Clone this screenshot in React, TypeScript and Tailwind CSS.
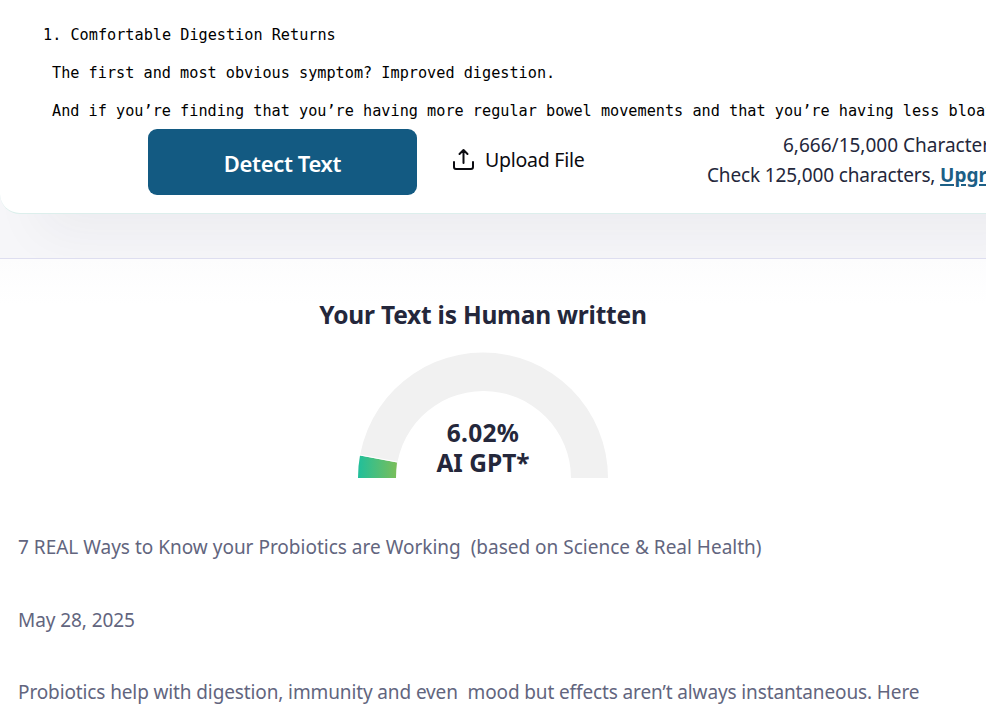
export default function App() {
  return (
    <main className="h-[717px] w-[986px] overflow-hidden bg-white font-['Noto_Sans',sans-serif] text-[#24273b]">
      <section className="h-[259px] overflow-hidden border-b border-[#dedef0] bg-[#f6f6f9]">
        <div className="h-[214px] w-[1040px] rounded-bl-[20px] border-b border-[#dcefec] bg-white shadow-[20px_38px_50px_-20px_rgba(30,35,50,0.05)]">
          <div className="h-[129px] pt-[16px] font-['DejaVu_Sans_Mono','Liberation_Mono',monospace] text-[15.2px] leading-[38px] tracking-[0.005px] whitespace-pre text-black">
            <p className="pl-[43px]">1. Comfortable Digestion Returns</p>
            <p className="pl-[52px]">The first and most obvious symptom? Improved digestion.</p>
            <p className="pl-[52px]">And if you’re finding that you’re having more regular bowel movements and that you’re having less bloating</p>
          </div>
          <div className="flex pl-[148px]">
            <button className="h-[66px] w-[269px] rounded-[9px] bg-[#135a82] pt-[3px] text-[22px] font-semibold tracking-[-0.35px] text-white">Detect Text</button>
            <button className="ml-[35px] flex h-[62px] items-center gap-[9px] text-[19.5px] tracking-[-0.25px] text-[#0b0b10]">
              <svg width="24" height="24" viewBox="0 0 24 24" fill="none" stroke="currentColor" strokeWidth="2" strokeLinecap="round" strokeLinejoin="round"><path d="M2 14v5q0 2 2 2h15q2 0 2-2v-5M11.5 15V2.5M7.5 6l4-4 4 4" /></svg>
              Upload File
            </button>
            <div className="ml-auto w-[333px] pt-px text-[19px] leading-[30px] whitespace-nowrap">
              <p className="pl-[76px]">6,666/15,000 Characters</p>
              <p className="tracking-[-0.16px]">Check 125,000 characters, <a className="font-bold tracking-normal text-[#1c5f86] underline decoration-2 underline-offset-2">Upgrade</a></p>
            </div>
          </div>
        </div>
      </section>
      <section className="bg-gradient-to-b from-[#fcfcfd] to-white to-10%">
        <h1 className="w-[966px] pt-[38px] text-center text-[24.5px] leading-[36px] font-bold tracking-[-0.22px]">Your Text is Human written</h1>
        <div className="mt-[19px] ml-[358px] grid h-[126px] w-[250px]">
          <svg className="col-start-1 row-start-1" width="250" height="126" viewBox="0 0 250 126">
            <defs><linearGradient id="score"><stop stopColor="#20bf9b" /><stop offset="1" stopColor="#7abe59" /></linearGradient></defs>
            <path d="M0 126a125 125.5 0 0 1 250 0h-37a87.5 87 0 0 0-175 0z" fill="#f1f1f1" />
            <path d="M0 126q0-12 2-22.5l37 7q-1 7-1 15.5z" fill="url(#score)" />
            <path d="M1 102.8l38.5 7.2" stroke="white" />
          </svg>
          <div className="col-start-1 row-start-1 pt-[66px] text-center text-[24.5px] leading-[30px] font-bold"><p className="tracking-[0.25px]">6.02%</p><p>AI GPT*</p></div>
        </div>
        <div className="pt-[54px] pl-[18px] text-[19px] leading-[30px] whitespace-pre text-[#62657e]">
          <p>7 REAL Ways to Know your Probiotics are Working  (based on Science &amp; Real Health)</p>
          <p className="mt-[43px] tracking-[-0.08px]">May 28, 2025</p>
          <p className="mt-[42px] tracking-[-0.12px]">Probiotics help with digestion, immunity and even  mood but effects aren’t always instantaneous. Here</p>
        </div>
      </section>
    </main>
  );
}
